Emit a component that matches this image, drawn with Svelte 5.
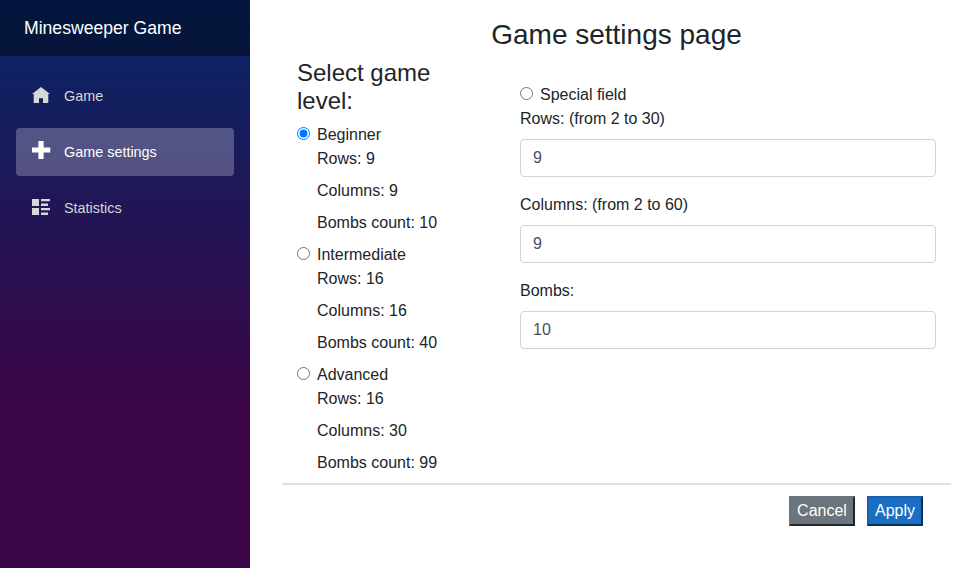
<script>
  const links = [
    { label: 'Game', top: -1, icon: 'M9 0 18 7H16.3V16H11V11.3H7V16H1.7V7H0Z' },
    { label: 'Game settings', top: -4, icon: 'M6.4 0h5.2v6.5H18.3v5H11.6V18H6.4v-6.5H0v-5h6.4Z' },
    { label: 'Statistics', top: -1, icon: 'M0 0h7v7H0ZM9 0h9v2.3H9ZM9 4.5h7V7H9ZM0 9h7v7H0ZM9 9h9v2.3H9ZM9 13.5h7V16H9Z' }
  ];
  const levels = [
    { name: 'Beginner', rows: 9, columns: 9, bombs: 10 },
    { name: 'Intermediate', rows: 16, columns: 16, bombs: 40 },
    { name: 'Advanced', rows: 16, columns: 30, bombs: 99 }
  ];
  let level = $state('Beginner');
  let rows = $state('9');
  let columns = $state('9');
  let bombs = $state('10');
  let active = $state(1);
</script>

<div class="page">
  <aside>
    <div class="brand">Minesweeper Game</div>
    <nav>
      {#each links as link, i}
        <button class="link" class:active={active === i} onclick={() => (active = i)}>
          <svg viewBox="0 0 19 18" width="19" height="18" style:margin-top="{link.top}px"><path d={link.icon} /></svg>
          <span>{link.label}</span>
        </button>
      {/each}
    </nav>
  </aside>

  <main>
    <h3>Game settings page</h3>
    <div class="columns">
      <section class="levels">
        <h4>Select game level:</h4>
        {#each levels as item}
          <div class="level">
            <label><input type="radio" name="level" value={item.name} bind:group={level} />{item.name}</label>
            <div class="details">
              <span>Rows: {item.rows}</span>
              <span>Columns: {item.columns}</span>
              <span>Bombs count: {item.bombs}</span>
            </div>
          </div>
        {/each}
      </section>
      <section class="custom">
        <label><input type="radio" name="level" value="Special" bind:group={level} />Special field</label>
        <div class="field"><label for="rows">Rows: (from 2 to 30)</label><input id="rows" class="control" bind:value={rows} /></div>
        <div class="field"><label for="columns">Columns: (from 2 to 60)</label><input id="columns" class="control" bind:value={columns} /></div>
        <div class="field"><label for="bombs">Bombs:</label><input id="bombs" class="control" bind:value={bombs} /></div>
      </section>
    </div>
    <footer>
      <button class="cancel">Cancel</button>
      <button class="apply">Apply</button>
    </footer>
  </main>
</div>

<style>
  :global(body) { margin: 0; background: #fff; }
  * { box-sizing: border-box; }
  .page {
    display: flex;
    height: 568px;
    overflow: hidden;
    font: 16px/24px "Liberation Sans", Arial, sans-serif;
    color: #212529;
  }
  aside {
    width: 250px;
    flex: none;
    background: linear-gradient(180deg, rgb(5, 39, 103) 0%, #3a0647 70%);
  }
  .brand {
    height: 56px;
    padding-left: 24px;
    background: rgba(0, 0, 0, .4);
    color: #fff;
    font-size: 17.6px;
    line-height: 56px;
  }
  nav { display: flex; flex-direction: column; gap: 8px; padding: 16px; }
  .link {
    display: flex;
    align-items: center;
    height: 48px;
    padding: 0 16px;
    border: 0;
    border-radius: 4px;
    background: none;
    color: #d7d7d7;
    font: 14.4px/48px "Liberation Sans", Arial, sans-serif;
    text-align: left;
  }
  .link.active { background: rgba(255, 255, 255, .25); color: #fff; }
  .link svg { flex: none; margin-right: 13px; fill: currentColor; }
  main { width: 669px; margin-left: 32px; }
  h3, h4 { margin: 0; font-weight: 400; }
  h3 { height: 58px; padding-top: 18px; font-size: 28px; line-height: 1.2; text-align: center; }
  h4 { width: 163px; height: 65px; padding-top: 1px; font-size: 24px; line-height: 28px; }
  .columns {
    display: flex;
    height: 427px;
    border-bottom: 2px solid #dee2e6;
  }
  .levels { width: 193px; padding-left: 15px; flex: none; }
  .custom { flex: 1; padding: 25px 15px 0 45px; }
  label { display: block; height: 24px; }
  input[type='radio'] { width: 13px; height: 13px; margin: 0 7px 0 0; }
  .details { display: flex; flex-direction: column; gap: 8px; height: 96px; padding-left: 20px; }
  .field { margin-bottom: 16px; }
  .control {
    display: block;
    width: 100%;
    height: 38px;
    margin-top: 8px;
    padding: 6px 12px;
    border: 1px solid #ced4da;
    border-radius: 4px;
    color: #495057;
    background: #fff;
    font: inherit;
  }
  footer { display: flex; justify-content: flex-end; gap: 12px; padding: 11px 28px 0 0; }
  footer button {
    height: 30px;
    padding: 1px 6px;
    color: #fff;
    font: inherit;
    line-height: 24px;
    border: 2px outset;
  }
  footer .cancel { width: 66px; background: #6c757d; border-color: #6c757d; }
  footer .apply { width: 56px; background: #1b6ec2; border-color: #1861ac; }
</style>
